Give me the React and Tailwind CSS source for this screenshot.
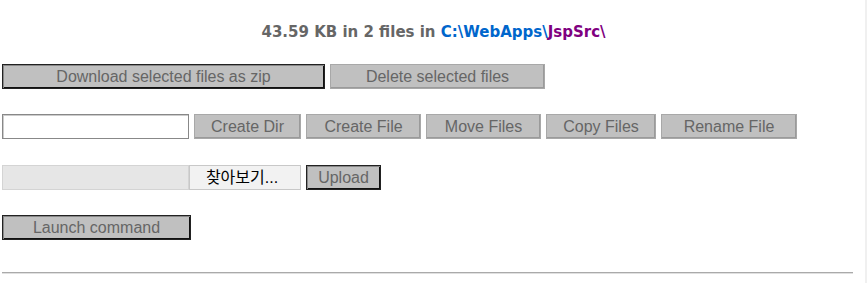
const BTN = 'h-[25px] bg-[#c0c0c0] text-[16px] leading-none text-[#666] text-center'
const FONT = { fontFamily: '"Liberation Sans", Arial, sans-serif' }

const DARK = `${BTN} border border-[#222] shadow-[inset_1px_1px_0_#888,inset_-1px_-1px_0_#111]`
const LIGHT = `${BTN} border border-[#a8a8a8] shadow-[inset_-1px_-1px_0_#9a9a9a]`

function Btn({ w, dark, children }) {
  return (
    <button type="button" className={`${dark ? DARK : LIGHT} ${w}`} style={FONT}>
      {children}
    </button>
  )
}

export default function App() {
  return (
    <div className="w-[867px] h-[283px] bg-white overflow-hidden relative" style={FONT}>
      {/* Summary */}
      <div
        className="pt-[23px] h-[41px] text-center text-[15px] font-bold leading-[18px] text-[#666]"
        style={{ fontFamily: '"DejaVu Sans", Verdana, sans-serif' }}
      >
        43.59 KB in 2 files in{' '}
        <span className="text-[#0066cc]">C:\</span>
        <span className="text-[#0066cc]">WebApps\</span>
        <span className="text-[#800080]">JspSrc\</span>
      </div>

      {/* Row 1 */}
      <div className="mt-[23px] ml-[2px] flex gap-[5px]">
        <Btn w="w-[323px]" dark>Download selected files as zip</Btn>
        <Btn w="w-[215px]">Delete selected files</Btn>
      </div>

      {/* Row 2 */}
      <div className="mt-[25px] ml-[2px] flex gap-[5px]">
        <input
          type="text"
          className="w-[187px] h-[25px] border border-[#888] shadow-[inset_1px_1px_0_#ccc] bg-white outline-none"
        />
        <Btn w="w-[107px]">Create Dir</Btn>
        <Btn w="w-[115px]">Create File</Btn>
        <Btn w="w-[115px]">Move Files</Btn>
        <Btn w="w-[110px]">Copy Files</Btn>
        <Btn w="w-[136px]">Rename File</Btn>
      </div>

      {/* Row 3 */}
      <div className="mt-[26px] ml-[2px] flex gap-[5px]">
        <div className="flex">
          <div className="w-[187px] h-[25px] bg-[#e6e6e6] border border-[#d4d4d4]" />
          <div
            className="w-[112px] h-[25px] bg-[#f2f2f2] border border-[#c8c8c8] text-[16px] leading-[23px] text-black text-center pr-[6px]"
            style={{ fontFamily: '"Liberation Sans", "Noto Sans CJK KR", sans-serif' }}
          >
            찾아보기...
          </div>
        </div>
        <button
          type="button"
          className={`${DARK} w-[75px] h-[24px] leading-[18px] items-start`}
          style={FONT}
        >
          Upload
        </button>
      </div>

      {/* Row 4 */}
      <div className="mt-[25px] ml-[2px] flex">
        <Btn w="w-[189px]" dark>Launch command</Btn>
      </div>

      <div className="mt-[32px] ml-[2px] w-[851px] border-t border-[#aaa] border-b border-b-[#e0e0e0]" />
      <div className="absolute right-0 top-0 h-full w-[2px] bg-[#f0f0f0]" />
    </div>
  )
}
